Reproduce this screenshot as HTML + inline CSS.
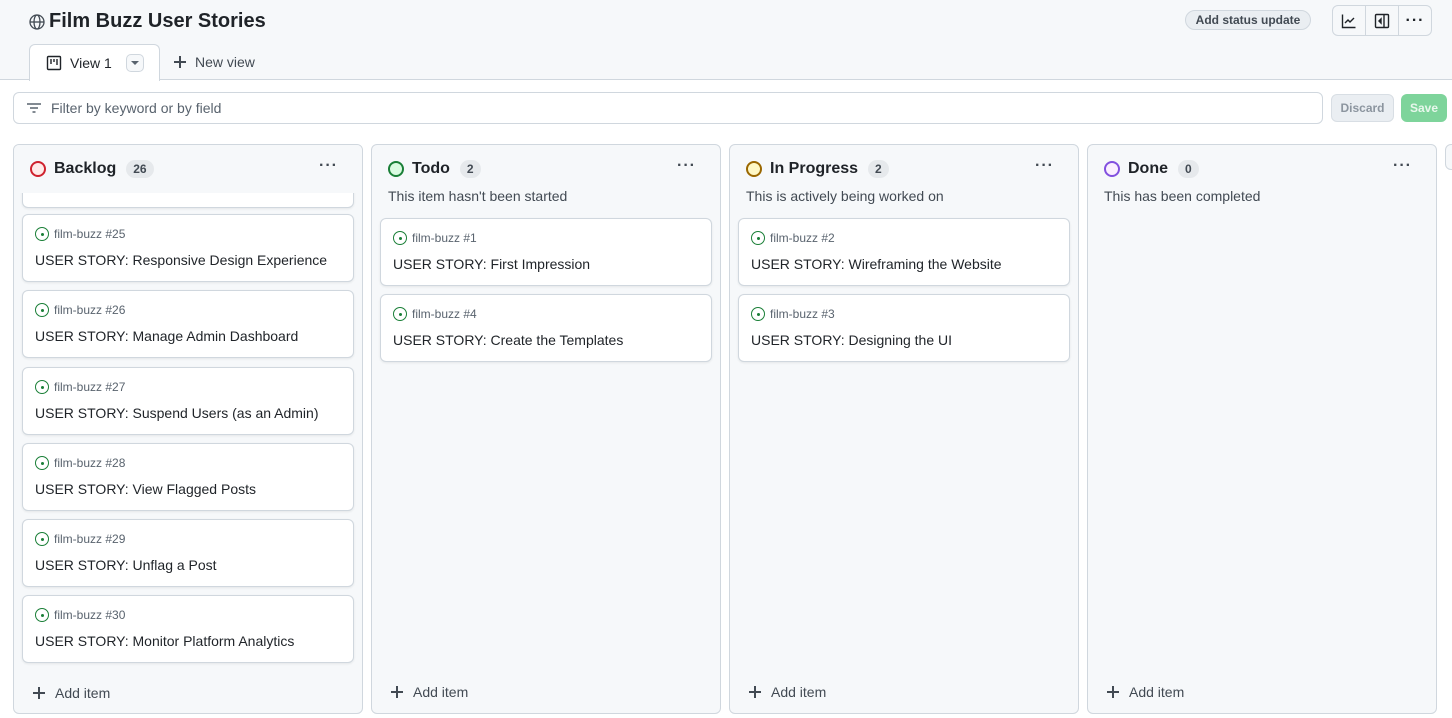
<!DOCTYPE html>
<html><head><meta charset="utf-8"><style>
*{box-sizing:border-box;margin:0;padding:0}
body{width:1452px;height:718px;overflow:hidden;background:#fff;font-family:"Liberation Sans",sans-serif;color:#1f2328;position:relative}
.top{position:absolute;left:0;top:0;width:1452px;height:80px;background:#f6f8fa;border-bottom:1px solid #d0d7de}
.abs{position:absolute}
.title{left:29px;top:10px;font-size:20px;font-weight:bold;display:flex;align-items:center;gap:4px}
.tab{left:29px;top:44px;width:131px;height:37px;background:#fff;border:1px solid #d0d7de;border-bottom:none;border-radius:6px 6px 0 0;font-size:14px;display:flex;align-items:center;padding-left:16px;gap:8px}
.dd{width:18px;height:18px;border:1px solid #d0d7de;border-radius:5px;background:#f6f8fa;display:flex;align-items:center;justify-content:center;margin-left:6px}
.nv{left:174px;top:53px;height:18px;font-size:14px;color:#424a53;display:flex;align-items:center;gap:9px;line-height:18px}
.plus{display:inline-block;width:12px;height:12px;position:relative}
.plus:before,.plus:after{content:"";position:absolute;background:#424a53}
.plus:before{left:5px;top:0;width:1.5px;height:12px}
.plus:after{left:0;top:5px;width:12px;height:1.5px}
.status{left:1185px;top:10px;width:126px;height:20px;border:1px solid #d0d7de;border-radius:10px;background:#eaeef2;font-size:12px;font-weight:bold;color:#424a53;text-align:center;line-height:18px}
.btng{left:1332px;top:5px;width:100px;height:31px;border:1px solid #d0d7de;border-radius:6px;background:#f6f8fa;display:flex}
.btng div{flex:1;display:flex;align-items:center;justify-content:center;border-right:1px solid #d0d7de}
.btng div:last-child{border:none}
.filter{left:13px;top:92px;width:1310px;height:32px;border:1px solid #d0d7de;border-radius:6px;font-size:14px;color:#59636e;display:flex;align-items:center;padding-left:12px;gap:9px}
.discard{left:1331px;top:94px;width:63px;height:28px;background:#eaeef2;border:1px solid #d8dee4;border-radius:6px;font-size:12px;font-weight:bold;color:#8c959f;text-align:center;line-height:26px}
.save{left:1401px;top:94px;width:46px;height:28px;background:#7ed49b;border-radius:6px;font-size:12px;font-weight:bold;color:#e8f7ec;text-align:center;line-height:28px}
.col{position:absolute;top:144px;width:350px;height:570px;background:#f6f8fa;border:1px solid #d0d7de;border-radius:6px;overflow:hidden}
.ch{position:absolute;left:16px;top:15px;display:flex;align-items:center;font-size:16px;font-weight:bold;gap:8px}
.ring{width:16px;height:16px;border-radius:50%;border:2px solid}
.cnt{font-size:12px;font-weight:bold;background:#e6e9ec;border-radius:10px;padding:2px 7px;color:#424a53;margin-left:2px}
.more{position:absolute;right:24px;top:12px;font-size:16px;letter-spacing:1px;color:#424a53;font-weight:bold}
.desc{position:absolute;left:16px;top:43px;font-size:14px;color:#424a53}
.card{position:absolute;left:8px;width:332px;height:68px;background:#fff;border:1px solid #d0d7de;border-radius:6px;box-shadow:0 1px 2px rgba(31,35,40,.08)}
.card .n{position:absolute;left:12px;top:12px;font-size:12px;color:#59636e;display:flex;align-items:center;gap:5px}
.card .t{position:absolute;left:12px;top:37px;font-size:14px;color:#1f2328}
.add{position:absolute;left:19px;bottom:12px;font-size:14px;color:#424a53;display:flex;align-items:center;gap:10px;line-height:18px}
.oi{width:14px;height:14px;border:1.5px solid #1a7f37;border-radius:50%;display:flex;align-items:center;justify-content:center}
.oi:after{content:"";width:3px;height:3px;background:#1a7f37;border-radius:50%}
</style></head><body>
<div class="top"></div>
<div class="abs title"><svg width="16" height="16" viewBox="0 0 16 16" fill="none" stroke="#424a53" stroke-width="1.3"><circle cx="8" cy="8" r="7"/><ellipse cx="8" cy="8" rx="3" ry="7"/><path d="M1 8h14"/></svg>Film Buzz User Stories</div>
<div class="abs tab"><svg width="16" height="16" viewBox="0 0 16 16" fill="none" stroke="#1f2328" stroke-width="1.4"><rect x="1.5" y="1.5" width="13" height="13" rx="1"/><path d="M5 4v5M8 4v3M11 4v6"/></svg>View 1<span class="dd"><svg width="8" height="5"><path d="M0 0h8L4 4z" fill="#59636e"/></svg></span></div>
<div class="abs nv"><span class="plus"></span>New view</div>
<div class="abs status">Add status update</div>
<div class="abs btng"><div><svg width="16" height="16" viewBox="0 0 16 16" fill="none" stroke="#1f2328" stroke-width="1.4"><path d="M1.5 1.5v13h13M4 10l3-3 2 2 4-4"/></svg></div><div><svg width="16" height="16" viewBox="0 0 16 16" fill="none" stroke="#1f2328" stroke-width="1.4"><rect x="1.5" y="1.5" width="13" height="13" rx="1"/><path d="M10 1.5v13"/><path d="M7 6v4L5 8z" fill="#1f2328"/></svg></div><div style="font-weight:bold;letter-spacing:1px">···</div></div>
<div class="abs filter"><svg width="16" height="16" viewBox="0 0 16 16" stroke="#59636e" stroke-width="1.4"><path d="M1 4h14M4 8h8M6.5 12h3"/></svg>Filter by keyword or by field</div>
<div class="abs discard">Discard</div>
<div class="abs save">Save</div>

<div class="col" style="left:13px">
 <div class="card" style="top:-5px"></div>
 <div style="position:absolute;left:0;top:0;width:350px;height:48px;background:#f6f8fa"></div>
 <div class="ch"><span class="ring" style="border-color:#cf222e;background:#ffebe9"></span>Backlog<span class="cnt">26</span></div><div class="more">···</div>
 <div class="card" style="top:69px"><div class="n"><span class="oi"></span>film-buzz #25</div><div class="t">USER STORY: Responsive Design Experience</div></div>
 <div class="card" style="top:145px"><div class="n"><span class="oi"></span>film-buzz #26</div><div class="t">USER STORY: Manage Admin Dashboard</div></div>
 <div class="card" style="top:222px"><div class="n"><span class="oi"></span>film-buzz #27</div><div class="t">USER STORY: Suspend Users (as an Admin)</div></div>
 <div class="card" style="top:298px"><div class="n"><span class="oi"></span>film-buzz #28</div><div class="t">USER STORY: View Flagged Posts</div></div>
 <div class="card" style="top:374px"><div class="n"><span class="oi"></span>film-buzz #29</div><div class="t">USER STORY: Unflag a Post</div></div>
 <div class="card" style="top:450px"><div class="n"><span class="oi"></span>film-buzz #30</div><div class="t">USER STORY: Monitor Platform Analytics</div></div>
 <div class="add" style="bottom:11px"><span class="plus"></span>Add item</div>
</div>
<div class="col" style="left:371px">
 <div class="ch"><span class="ring" style="border-color:#1a7f37;background:#dafbe1"></span>Todo<span class="cnt">2</span></div><div class="more">···</div>
 <div class="desc">This item hasn't been started</div>
 <div class="card" style="top:73px"><div class="n"><span class="oi"></span>film-buzz #1</div><div class="t">USER STORY: First Impression</div></div>
 <div class="card" style="top:149px"><div class="n"><span class="oi"></span>film-buzz #4</div><div class="t">USER STORY: Create the Templates</div></div>
 <div class="add"><span class="plus"></span>Add item</div>
</div>
<div class="col" style="left:729px">
 <div class="ch"><span class="ring" style="border-color:#9a6700;background:#fff8c5"></span>In Progress<span class="cnt">2</span></div><div class="more">···</div>
 <div class="desc">This is actively being worked on</div>
 <div class="card" style="top:73px"><div class="n"><span class="oi"></span>film-buzz #2</div><div class="t">USER STORY: Wireframing the Website</div></div>
 <div class="card" style="top:149px"><div class="n"><span class="oi"></span>film-buzz #3</div><div class="t">USER STORY: Designing the UI</div></div>
 <div class="add"><span class="plus"></span>Add item</div>
</div>
<div class="col" style="left:1087px">
 <div class="ch"><span class="ring" style="border-color:#8250df;background:#fbefff"></span>Done<span class="cnt">0</span></div><div class="more">···</div>
 <div class="desc">This has been completed</div>
 <div class="add"><span class="plus"></span>Add item</div>
</div>
<div class="col" style="left:1445px;width:20px;height:26px;top:144px"></div>
</body></html>
